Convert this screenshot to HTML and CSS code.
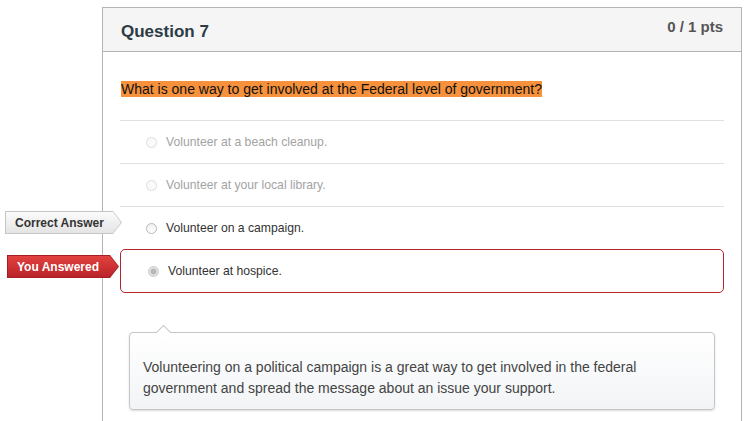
FILE: index.html
```html
<!DOCTYPE html>
<html>
<head>
<meta charset="utf-8">
<link rel="stylesheet" href="styles.css">
</head>
<body>
<div class="page">
  <div class="card">
    <div class="card-header">
      <h2 class="title">Question 7</h2>
      <span class="pts">0 / 1 pts</span>
    </div>
    <div class="card-body">
      <p class="question"><span class="hl">What is one way to get involved at the Federal level of government?</span></p>
      <div class="answers">
        <div class="answer muted"><span class="radio"></span><span class="atext">Volunteer at a beach cleanup.</span></div>
        <div class="answer muted"><span class="radio"></span><span class="atext">Volunteer at your local library.</span></div>
        <div class="answer correct">
          <span class="tag tag-correct"><span class="tag-fill"></span><span class="tag-text">Correct Answer</span></span>
          <span class="radio"></span><span class="atext">Volunteer on a campaign.</span>
        </div>
        <div class="answer wrong">
          <span class="tag tag-wrong"><span class="tag-fill"></span><span class="tag-text">You Answered</span></span>
          <span class="radio checked"></span><span class="atext">Volunteer at hospice.</span>
        </div>
      </div>
      <div class="comment">
        <p>Volunteering on a political campaign is a great way to get involved in the federal government and spread the message about an issue your support.</p>
      </div>
    </div>
  </div>
</div>
</body>
</html>
```
FILE: styles.css
```css
html, body {
  margin: 0;
  padding: 0;
  background: #fff;
  overflow: hidden;
}
body {
  font-family: "Liberation Sans", Arial, sans-serif;
  color: #333;
}
.page {
  padding: 7px 0 0 102px;
}
.card {
  width: 638px;
  border: 1px solid #b4b4b4;
  padding-bottom: 60px;
}
.card-header {
  height: 43px;
  background: #f5f5f5;
  border-bottom: 1px solid #b4b4b4;
  display: flex;
  justify-content: space-between;
  align-items: flex-start;
  padding: 0 18px;
}
.title {
  margin: 14px 0 0;
  font-size: 17px;
  line-height: 20px;
  font-weight: bold;
  color: #2d3b45;
}
.pts {
  margin-top: 10px;
  font-size: 15px;
  line-height: 18px;
  font-weight: bold;
  color: #555;
}
.question {
  margin: 0;
  padding: 27px 18px 0;
  font-size: 14px;
  line-height: 21px;
  height: 41px;
  color: #111;
}
.hl {
  background: #f7913b;
}
.answers {
  margin: 0 17px;
}
.answer {
  position: relative;
  height: 42px;
  border-top: 1px solid #e0e0e0;
  display: flex;
  align-items: center;
  padding-left: 26px;
  font-size: 12.2px;
  color: #333;
}
.answer.muted {
  color: #a3a3a3;
}
.answer.wrong {
  border: 1px solid #b5272d;
  border-radius: 5px;
  padding-left: 27px;
}
.radio {
  width: 9px;
  height: 9px;
  border: 1px solid #b8b8b8;
  border-radius: 50%;
  background: linear-gradient(#f0f0f0, #fff);
  margin-right: 9px;
  flex: none;
  box-sizing: content-box;
}
.muted .radio {
  border-color: #dcdcdc;
  background: #fafafa;
}
.radio.checked {
  border-color: #c8c8c8;
  background: radial-gradient(circle, #b8b8b8 0, #b8b8b8 2.5px, #e4e4e4 3.5px);
}
.atext {
  white-space: nowrap;
}
.tag {
  position: absolute;
  height: 23px;
  display: flex;
  align-items: center;
  font-size: 12px;
  font-weight: bold;
  clip-path: polygon(0 0, calc(100% - 9px) 0, 100% 50%, calc(100% - 9px) 100%, 0 100%);
}
.tag-fill {
  position: absolute;
  inset: 1px 1px 1px 1px;
  clip-path: polygon(0 0, calc(100% - 8px) 0, 100% 50%, calc(100% - 8px) 100%, 0 100%);
}
.tag-text {
  position: relative;
  padding-left: 10px;
  white-space: nowrap;
}
.tag-correct {
  top: 4px;
  left: -115px;
  width: 117px;
  background: #c6c6c6;
  color: #333;
}
.tag-correct .tag-fill {
  background: linear-gradient(#fbfbfb, #e4e4e4);
}
.tag-wrong {
  top: 5px;
  left: -114px;
  width: 112px;
  background: #a41e22;
  color: #fff;
}
.tag-wrong .tag-fill {
  background: linear-gradient(#e2413f, #b9242a);
}
.comment {
  position: relative;
  margin: 39px 26px 0;
  border: 1px solid #c6c6c6;
  border-radius: 4px;
  background: linear-gradient(#fff, #f2f4f6);
  box-shadow: 0 1px 2px rgba(0,0,0,0.15);
  padding: 24px 13px 10px;
}
.comment::before {
  content: "";
  position: absolute;
  top: -6px;
  left: 28px;
  width: 10px;
  height: 10px;
  background: #fff;
  border-top: 1px solid #c6c6c6;
  border-left: 1px solid #c6c6c6;
  transform: rotate(45deg);
}
.comment p {
  margin: 0;
  font-size: 14px;
  line-height: 21px;
  color: #444;
}
```
